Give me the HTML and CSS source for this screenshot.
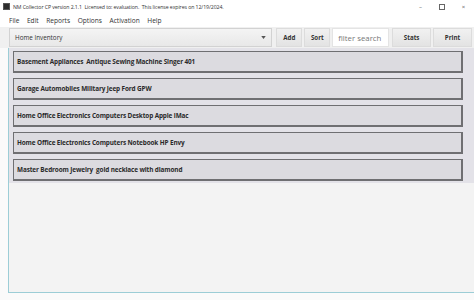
FILE: index.html
```html
<!DOCTYPE html>
<html lang="en">
<head>
    <meta charset="UTF-8">
    <title>NM Collector CP</title>
    <link rel="stylesheet" href="styles.css">
</head>
<body>

    <div class="titlebar">
        <span class="app-icon"></span>
        <span class="title">NM Collector CP version 2.1.1&nbsp; Licensed to: evaluation.&nbsp; This license expires on 12/19/2024.</span>
        <div class="win-controls">
            <span>&#8211;</span>
            <span class="max"></span>
            <span>&#215;</span>
        </div>
    </div>

    <div class="menubar">
        <span>File</span>
        <span>Edit</span>
        <span>Reports</span>
        <span>Options</span>
        <span>Activation</span>
        <span>Help</span>
    </div>

    <div class="toolbar">
        <div class="dropdown">
            <span>Home Inventory</span>
            <svg width="5" height="3" viewBox="0 0 6 4"><path d="M0 0h6L3 4z" fill="#555"/></svg>
        </div>
        <button class="tool-btn add">Add</button>
        <button class="tool-btn sort">Sort</button>
        <div class="search">filter search</div>
        <button class="tool-btn stats">Stats</button>
        <button class="tool-btn print">Print</button>
    </div>

    <div class="main">
        <div class="list">
            <div class="item">Basement Appliances&nbsp; Antique Sewing Machine Singer 401</div>
            <div class="item">Garage Automobiles Military Jeep Ford GPW</div>
            <div class="item">Home Office Electronics Computers Desktop Apple iMac</div>
            <div class="item">Home Office Electronics Computers Notebook HP Envy</div>
            <div class="item">Master Bedroom Jewelry&nbsp; gold necklace with diamond</div>
        </div>
    </div>

</body>
</html>
```

FILE: styles.css
```css
html, body {
    margin: 0;
    padding: 0;
}

body {
    width: 474px;
    height: 300px;
    box-sizing: border-box;
    padding-bottom: 7px;
    overflow: hidden;
    font-family: 'Open Sans', 'Noto Sans', sans-serif;
    color: #222;
    background: #fafafa;
    display: flex;
    flex-direction: column;
}

.titlebar {
    flex: none;
    height: 13px;
    display: flex;
    align-items: center;
    background: #ffffff;
    padding-left: 3px;
}

.app-icon {
    width: 5px;
    height: 5px;
    background: #2d2d2d;
    border: 1px solid #555;
    margin-right: 3px;
}

.title {
    font-size: 5.2px;
    letter-spacing: -0.08px;
    color: #333;
    white-space: nowrap;
}

.win-controls {
    margin-left: auto;
    display: flex;
    align-items: center;
    font-size: 6px;
    color: #555;
}

.win-controls span {
    width: 21px;
    text-align: center;
}

.win-controls .max {
    width: 4px;
    height: 4px;
    border: 1px solid #666;
    margin: 0 8px 0 8px;
}

.menubar {
    flex: none;
    height: 14px;
    display: flex;
    align-items: center;
    background: #ffffff;
    font-size: 6.6px;
    color: #333;
    padding-left: 9px;
    gap: 7.5px;
}

.toolbar {
    flex: none;
    height: 21px;
    display: flex;
    align-items: center;
    padding: 0 2px 0 9px;
    gap: 2px;
    background: #f0f0f0;
}

.dropdown {
    width: 264px;
    height: 19px;
    box-sizing: border-box;
    border: 1px solid #d2d2d2;
    background: linear-gradient(#f4f4f4, #e8e8e8);
    display: flex;
    align-items: center;
    justify-content: space-between;
    padding: 0 5px 0 5px;
    font-size: 6.3px;
    color: #333;
    margin-right: 2px;
}

.tool-btn {
    height: 19px;
    box-sizing: border-box;
    border: 1px solid #dcdcdc;
    background: linear-gradient(#f1f1f1, #e3e3e3);
    font-family: inherit;
    font-size: 6.2px;
    font-weight: bold;
    color: #333;
    padding: 0;
}

.add { width: 26px; }
.sort { width: 26px; }
.stats { width: 39px; margin-left: 1px; }
.print { width: 39px; }

.search {
    width: 57px;
    height: 19px;
    box-sizing: border-box;
    background: #ffffff;
    border: 1px solid #e4e4e4;
    font-size: 7.8px;
    color: #777;
    padding-left: 5px;
    display: flex;
    align-items: center;
}

.main {
    flex: 1;
    margin-left: 8px;
    border-left: 1px solid #9ccdd6;
    border-bottom: 1px solid #9ccdd6;
    background: #f3f3f3;
}

.list {
    background: #e3e2e8;
    padding: 3px 11px 2px 4px;
    display: flex;
    flex-direction: column;
    gap: 5px;
}

.item {
    height: 22px;
    box-sizing: border-box;
    border: 1px solid #6f6f72;
    border-right-width: 2px;
    border-bottom-width: 2px;
    background: #dcdbe0;
    font-size: 6.4px;
    letter-spacing: -0.12px;
    font-weight: bold;
    color: #2a2a2a;
    padding-left: 3px;
    display: flex;
    align-items: center;
}
```
